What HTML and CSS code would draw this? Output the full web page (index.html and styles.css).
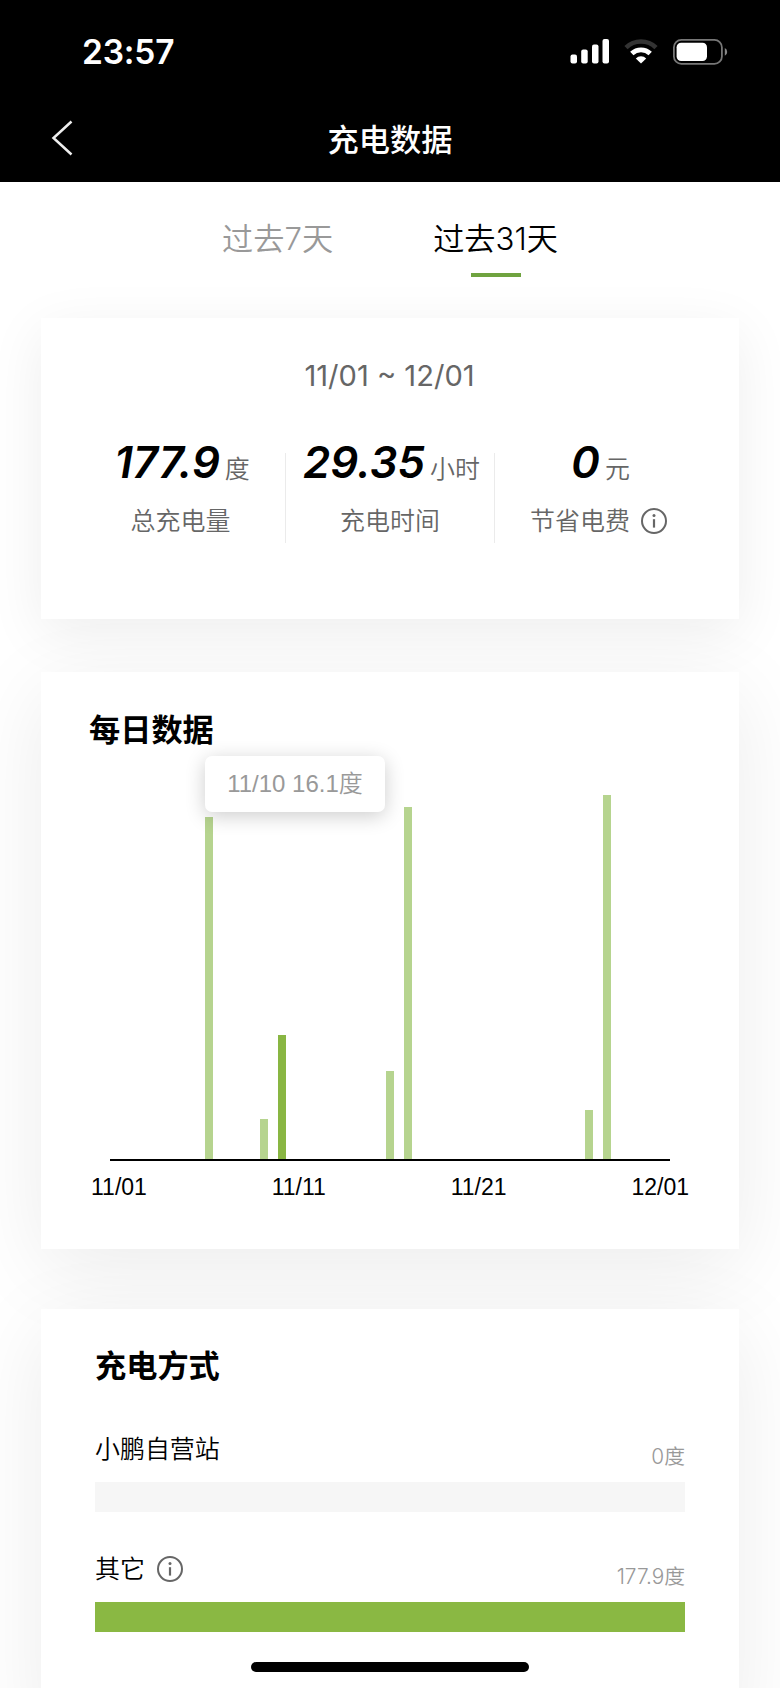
FILE: index.html
```
<!DOCTYPE html>
<html lang="zh-CN">
<head>
    <meta charset="UTF-8">
    <meta name="viewport" content="width=device-width, initial-scale=1.0">
    <title>充电数据</title>
    <link rel="stylesheet" href="styles.css">
</head>
<body>
    <header class="header">
        <div class="status-bar">
            <span class="time">23:57</span>
            <div class="status-icons">
                <svg class="signal" width="39" height="26" viewBox="0 0 39 26" fill="#fff">
                    <rect x="0.5" y="15.5" width="6.5" height="9" rx="2"/>
                    <rect x="11.2" y="10.5" width="6.5" height="14" rx="2"/>
                    <rect x="22" y="5.5" width="6.5" height="19" rx="2"/>
                    <rect x="32.5" y="0" width="6.5" height="24.5" rx="2"/>
                </svg>
                <svg class="wifi" width="34" height="26" viewBox="0 0 34 26" fill="none">
                    <path d="M2 8.6 A 21.5 21.5 0 0 1 32 8.6" stroke="#333" stroke-width="4.6"/>
                    <path d="M7.8 14.5 A 13.3 13.3 0 0 1 26.2 14.5" stroke="#fff" stroke-width="4.8"/>
                    <path d="M17 24.6 L11.8 19.4 A 7.4 7.4 0 0 1 22.2 19.4 Z" fill="#fff"/>
                </svg>
                <svg class="battery" width="55" height="26" viewBox="0 0 55 26" fill="none">
                    <rect x="0.9" y="0.9" width="48" height="24" rx="7.5" stroke="#777" stroke-width="1.8"/>
                    <rect x="3.6" y="3.8" width="30.4" height="18.2" rx="4.5" fill="#fff"/>
                    <path d="M51.8 9 Q54.2 10.2 54.2 12.9 Q54.2 15.6 51.8 16.8 Z" fill="#888"/>
                </svg>
            </div>
        </div>
        <div class="nav-bar">
            <svg class="back" width="22" height="36" viewBox="0 0 22 36" fill="none" stroke="#eee" stroke-width="2.5">
                <path d="M20.5 1.5 L2.5 18 L20.5 34.5"/>
            </svg>
            <h1>充电数据</h1>
        </div>
    </header>

    <nav class="tabs">
        <div class="tab">过去7天</div>
        <div class="tab active">过去31天</div>
    </nav>

    <main>
        <section class="card summary">
            <div class="date-range">11/01 ~ 12/01</div>
            <div class="stats">
                <div class="stat">
                    <div class="value"><b>177.9</b><span>度</span></div>
                    <div class="label">总充电量</div>
                </div>
                <div class="stat">
                    <div class="value"><b>29.35</b><span>小时</span></div>
                    <div class="label">充电时间</div>
                </div>
                <div class="stat">
                    <div class="value"><b>0</b><span>元</span></div>
                    <div class="label">节省电费
                        <svg class="info" width="28" height="28" viewBox="0 0 28 28" fill="none" stroke="#666">
                            <circle cx="14" cy="14" r="12" stroke-width="2"/>
                            <path d="M14 12.2V20.6" stroke-width="2.2"/>
                            <circle cx="14" cy="8.6" r="1.5" fill="#666" stroke="none"/>
                        </svg>
                    </div>
                </div>
            </div>
        </section>

        <section class="card daily">
            <h2>每日数据</h2>
            <div class="chart">
                <div class="bars">
                    <i style="grid-column: 6; height: 342px"></i>
                    <i style="grid-column: 9; height: 40px"></i>
                    <i class="selected" style="grid-column: 10; height: 124px"></i>
                    <i style="grid-column: 16; height: 88px"></i>
                    <i style="grid-column: 17; height: 352px"></i>
                    <i style="grid-column: 27; height: 49px"></i>
                    <i style="grid-column: 28; height: 364px"></i>
                </div>
                <div class="tooltip">11/10 16.1度</div>
            </div>
            <div class="x-axis">
                <span>11/01</span>
                <span>11/11</span>
                <span>11/21</span>
                <span>12/01</span>
            </div>
        </section>

        <section class="card methods">
            <h2>充电方式</h2>
            <div class="method">
                <div class="method-head">
                    <span class="name">小鹏自营站</span>
                    <span class="amount">0度</span>
                </div>
                <div class="track"><div class="fill" style="width: 0%"></div></div>
            </div>
            <div class="method">
                <div class="method-head">
                    <span class="name">其它
                        <svg class="info" width="28" height="28" viewBox="0 0 28 28" fill="none" stroke="#666">
                            <circle cx="14" cy="14" r="12" stroke-width="2"/>
                            <path d="M14 12.2V20.6" stroke-width="2.2"/>
                            <circle cx="14" cy="8.6" r="1.5" fill="#666" stroke="none"/>
                        </svg>
                    </span>
                    <span class="amount">177.9度</span>
                </div>
                <div class="track"><div class="fill" style="width: 100%"></div></div>
            </div>
        </section>
    </main>

    <div class="home-indicator"></div>
</body>
</html>
```
FILE: styles.css
```
* {
    box-sizing: border-box;
    margin: 0;
    padding: 0;
}

body {
    height: 1688px;
    overflow: hidden;
    background: #fff;
    color: #000;
    font-family: Inter, "Noto Sans CJK SC", sans-serif;
}

svg {
    display: block;
    flex: none;
}

/* 顶部 */
.header {
    height: 182px;
    background: #000;
    color: #fff;
}

.status-bar {
    display: flex;
    justify-content: space-between;
    align-items: center;
    height: 104px;
    padding: 0 52px 0 82px;
}

.time {
    font-size: 33.5px;
    font-weight: 580;
    letter-spacing: -0.2px;
}

.status-icons {
    display: flex;
    gap: 15px;
}

.nav-bar {
    display: grid;
    grid-template-columns: 1fr auto 1fr;
    align-items: center;
    height: 68px;
    padding: 0 51px;
}

.nav-bar h1 {
    padding-top: 3px;
    font-size: 31.2px;
    font-weight: 500;
    line-height: 40px;
}

/* 切换 */
.tabs {
    display: flex;
    justify-content: center;
    gap: 100px;
    height: 136px;
    padding-top: 33px;
}

.tab {
    font-size: 31.2px;
    font-weight: 350;
    line-height: 48px;
    color: #999;
}

.tab.active {
    color: #000;
}

.tab.active::after {
    content: "";
    display: block;
    width: 50px;
    height: 4px;
    margin: 10px auto 0;
    background: #6fa33f;
}

/* 卡片 */
.card {
    width: 698px;
    margin: 0 auto;
    background: #fff;
    box-shadow: 0 14px 54px rgba(0, 0, 0, 0.07);
}

.card h2 {
    font-size: 31.2px;
    font-weight: 700;
    line-height: 44px;
}

.summary {
    height: 301px;
    padding: 38px 36px 0 35px;
}

.date-range {
    font-size: 29.1px;
    font-weight: 380;
    line-height: 40px;
    text-align: center;
    color: #666;
}

.stats {
    display: grid;
    grid-template-columns: repeat(3, 1fr);
    margin-top: 57px;
}

.stat {
    height: 90px;
    color: #666;
    text-align: center;
    font-size: 24.96px;
    font-weight: 350;
}

.stat + .stat {
    border-left: 1px solid #ebebeb;
}

.value {
    margin-top: -14px;
    padding-left: 3px;
    line-height: 48px;
    white-space: nowrap;
}

.value b {
    margin-right: 5px;
    font-size: 43.7px;
    font-weight: 640;
    font-style: italic;
    color: #000;
}

.label {
    display: flex;
    justify-content: center;
    align-items: center;
    gap: 10px;
    margin-top: 10px;
    line-height: 36px;
}

/* 每日数据 */
.daily {
    height: 577px;
    margin-top: 53px;
    padding: 36px 48px 0;
    box-shadow: 0 20px 80px rgba(0, 0, 0, 0.08);
}

.chart {
    position: relative;
    height: 409px;
    padding: 0 21px;
}

.bars {
    display: grid;
    grid-template-columns: repeat(31, 1fr);
    align-items: end;
    justify-items: center;
    height: 409px;
    border-bottom: 2px solid #000;
}

.bars i {
    grid-row: 1;
    width: 8px;
    background: #b6d48f;
}

.bars i.selected {
    background: #89b643;
}

.tooltip {
    position: absolute;
    top: 4px;
    left: 116px;
    width: 180px;
    height: 56px;
    border-radius: 7px;
    background: #fff;
    box-shadow: 0 4px 20px rgba(0, 0, 0, 0.2);
    color: #999;
    font-family: "Liberation Sans", "Noto Sans CJK SC", sans-serif;
    font-size: 24px;
    font-weight: 350;
    line-height: 55px;
    text-align: center;
}

.x-axis {
    display: flex;
    justify-content: space-between;
    margin-top: 12px;
    padding: 0 2px;
    font-family: "Liberation Sans", sans-serif;
    font-size: 23px;
    line-height: 28px;
}

/* 充电方式 */
.methods {
    height: 420px;
    margin-top: 60px;
    padding: 35px 54px 0;
    box-shadow: 0 20px 80px rgba(0, 0, 0, 0.08);
}

.method-head {
    display: flex;
    justify-content: space-between;
    height: 50px;
}

.method {
    margin-top: 40px;
}

.method:first-of-type {
    margin-top: 44px;
}

.name {
    display: flex;
    align-items: center;
    gap: 11px;
    height: 36px;
    font-size: 24.96px;
    font-weight: 350;
    line-height: 36px;
    margin-top: -1px;
}

.amount {
    padding-top: 11px;
    font-size: 20.8px;
    font-weight: 350;
    line-height: 28px;
    color: #999;
}

.track {
    height: 30px;
    background: #f6f6f6;
}

.fill {
    height: 100%;
    background: #8ab843;
}

.home-indicator {
    position: absolute;
    left: 251px;
    top: 1662px;
    width: 278px;
    height: 10px;
    border-radius: 5px;
    background: #000;
}
```
